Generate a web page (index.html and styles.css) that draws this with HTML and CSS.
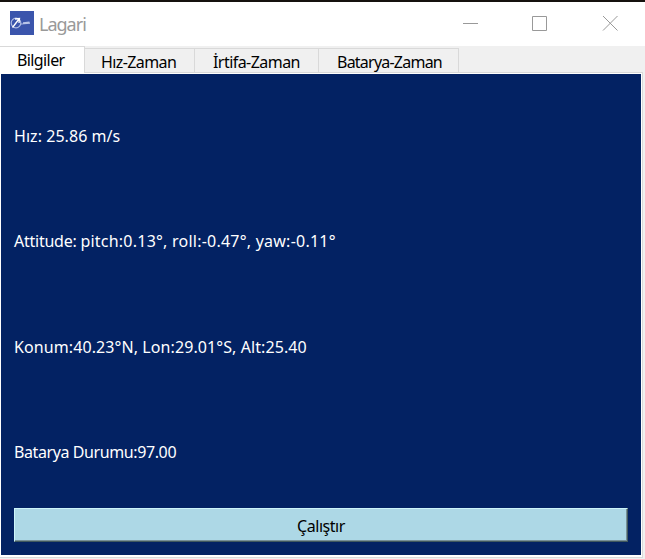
FILE: index.html
```html
<!DOCTYPE html>
<html lang="tr">
<head>
<meta charset="utf-8">
<title>Lagari</title>
<link rel="stylesheet" href="styles.css">
</head>
<body>
<div class="window">
  <header class="titlebar">
    <svg class="logo" width="24" height="24" viewBox="0 0 24 24" fill="none">
      <rect width="24" height="24" fill="#3b55ac"/>
      <circle cx="6" cy="12" r="4.800" stroke="#aebbe3" stroke-width="1.2"/>
      <path d="M2.500 16.500L9 8M5 8L9.500 7.500L9 12" stroke="#fff" stroke-width="1.3"/>
      <path d="M11 13L20 12.200M13 11.800L19.500 11" stroke="#b9c5e8" stroke-width="1.2"/>
    </svg>
    <h1 class="title">Lagari</h1>
    <svg class="controls" width="160" height="17" viewBox="0 0 160 17" fill="none" stroke="#999">
      <path d="M1 8.500H16M70.500 1.500H84.500V15.500H70.500ZM141 1L155.500 15.500M155.500 1L141 15.500"/>
    </svg>
  </header>
  <nav class="tabs">
    <div class="tab active">Bilgiler</div>
    <div class="tab speed">Hız-Zaman</div>
    <div class="tab altitude">İrtifa-Zaman</div>
    <div class="tab battery">Batarya-Zaman</div>
  </nav>
  <main class="frame">
    <div class="panel">
      <p class="velocity">Hız: 25.86 m/s</p>
      <p class="attitude">Attitude: <span>pitch:0.13°, roll:-0.47°, yaw:-0.11°</span></p>
      <p class="location">Konum:40.23°N, Lon:29.01°S, Alt:25.40</p>
      <p class="charge">Batarya Durumu:97.00</p>
      <button class="run"><span>Çalıştır</span></button>
    </div>
  </main>
</div>
</body>
</html>
```
FILE: styles.css
```css
* { box-sizing: border-box; }
body { margin: 0; background: #f0f0f0; font: 16px/20px "Noto Sans", sans-serif; color: #000; }
.window { width: 645px; height: 559px; overflow: hidden; border-top: 2px solid #15110e; }
.titlebar { display: flex; align-items: center; height: 44px; padding: 0 23px 0 10px; background: #fff; }
.logo { margin-bottom: 2px; }
.title { margin: 0 0 0 5px; font-size: 18px; font-weight: 400; line-height: 24px; color: #999; letter-spacing: -1px; }
.controls { margin-left: auto; margin-bottom: 1px; }
.tabs { display: flex; align-items: flex-end; height: 27px; width: 643px; box-shadow: inset 0 -1px #d9d9d9; }
.tab { height: 25px; border: 1px solid #d9d9d9; border-left: 0; background: #f0f0f0; white-space: nowrap; line-height: 26px; letter-spacing: -0.6px; }
.tab.active { width: 85px; height: 27px; padding-left: 17px; background: #fff; border-bottom: 0; letter-spacing: -0.6px; }
.speed { width: 110px; padding-left: 16px; }
.altitude { width: 124px; padding-left: 18px; letter-spacing: -0.55px; }
.tab.battery { width: 140px; padding-left: 18px; letter-spacing: -0.77px; }
.frame { width: 643px; height: 485px; padding: 1px 1px 2px 1px; background: #fff; border-right: 1px solid #d9d9d9; border-bottom: 1px solid #d9d9d9; }
.panel { display: flex; flex-direction: column; height: 481px; width: 640px; padding: 9px 13px 13px; background: #032263; color: #fff; }
.panel p { display: flex; align-items: center; flex: 1; margin: 0; white-space: pre; }
.velocity { letter-spacing: 0.05px; }
.attitude { letter-spacing: -0.25px; }
.attitude span { letter-spacing: 0.23px; }
.location { letter-spacing: 0.09px; }
.charge { letter-spacing: -0.4px; }
.run { flex: none; height: 34px; margin-top: 3px; padding: 0; border: 1px solid; border-color: #cdf5fa #40585e #40585e #cdf5fa; box-shadow: inset -1px -1px #789097; background: #add8e6; color: #000; font: inherit; letter-spacing: -0.45px; }
.run span { position: relative; top: 1px; }
```
